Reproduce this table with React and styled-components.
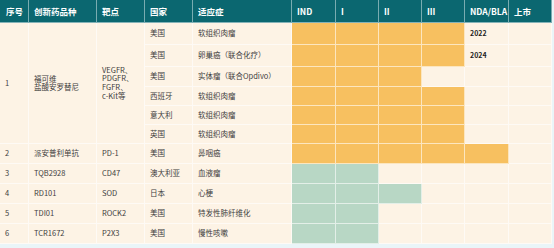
import React from "react"
import styled, { createGlobalStyle } from "styled-components"

const GlobalStyle = createGlobalStyle`
  html, body {
    margin: 0;
    padding: 0;
    background: #eaf5f8;
  }
  body {
    font-family: "Noto Sans CJK SC", "Noto Sans", sans-serif;
  }
`

const fills = {
  orange: "#f7c060",
  green: "#b8d7c5",
  none: "#fdf3e5",
}

const Table = styled.div`
  width: 552px;
  display: grid;
  grid-template-columns: 29px 68px 48px 48px 99px 44px 43px 43px 43px 44px 43px;
  grid-template-rows: 23px 22px 22px 20px 19px 19px 19px 20px 20px 20px 20px 20px;
  background: #fdf3e5;
`

const HeadCell = styled.div`
  background: #0b6770;
  color: #fff;
  font-size: 8.5px;
  font-weight: 700;
  display: flex;
  align-items: center;
  padding-left: ${({ $pad }) => $pad ?? 5}px;
  white-space: nowrap;
  overflow: hidden;
  border-right: 1px solid rgba(255, 255, 255, 0.45);
  border-bottom: 1px solid rgba(255, 255, 255, 0.5);
  box-sizing: border-box;
`

const Cell = styled.div`
  background: ${({ $fill }) => fills[$fill || "none"]};
  color: #3d3d3d;
  font-size: 7.5px;
  line-height: 8.6px;
  display: flex;
  align-items: center;
  padding-left: 5px;
  box-sizing: border-box;
  white-space: nowrap;
  border-right: 1px solid rgba(255, 255, 255, 0.6);
  border-bottom: 1px solid rgba(255, 255, 255, 0.6);
  grid-row: ${({ $span }) => ($span ? `span ${$span}` : "auto")};
`

const Lines = styled.div`
  display: flex;
  flex-direction: column;
  line-height: ${({ $lh }) => $lh}px;
`

const Year = styled.span`
  font-weight: 700;
  color: #1e1e1e;
  font-size: 7px;
`

const heads = ["序号", "创新药品种", "靶点", "国家", "适应症", "IND", "I", "II", "III", "NDA/BLA", "上市"]

const O = "orange"
const G = "green"

const fcRows = [
  { country: "美国", ind: "软组织肉瘤", phases: [O, O, O, O], year: "2022" },
  { country: "美国", ind: "卵巢癌（联合化疗）", phases: [O, O, O, O], year: "2024" },
  { country: "美国", ind: "实体瘤（联合Opdivo）", phases: [O, O, O] },
  { country: "西班牙", ind: "软组织肉瘤", phases: [O, O, O, O] },
  { country: "意大利", ind: "软组织肉瘤", phases: [O, O, O, O] },
  { country: "英国", ind: "软组织肉瘤", phases: [O, O, O, O] },
]

const others = [
  { no: "2", drug: "派安普利单抗", target: "PD-1", country: "美国", ind: "鼻咽癌", phases: [O, O, O, O, O] },
  { no: "3", drug: "TQB2928", target: "CD47", country: "澳大利亚", ind: "血液瘤", phases: [G, G] },
  { no: "4", drug: "RD101", target: "SOD", country: "日本", ind: "心梗", phases: [G, G, G] },
  { no: "5", drug: "TDI01", target: "ROCK2", country: "美国", ind: "特发性肺纤维化", phases: [G, G] },
  { no: "6", drug: "TCR1672", target: "P2X3", country: "美国", ind: "慢性咳嗽", phases: [G, G] },
]

// IND, I, II, III, NDA/BLA, 上市
const Phases = ({ phases, year }) =>
  [0, 1, 2, 3, 4, 5].map(i => (
    <Cell key={i} $fill={phases[i]}>
      {i === 4 && year ? <Year>{year}</Year> : null}
    </Cell>
  ))

export default function App() {
  return (
    <>
      <GlobalStyle />
      <Table>
        {heads.map((h, i) => (
          <HeadCell key={h} $pad={i === 0 ? 6 : 5}>
            {h}
          </HeadCell>
        ))}

        {fcRows.map((r, i) => (
          <React.Fragment key={"fc" + i}>
            {i === 0 && (
              <>
                <Cell $span={6}>1</Cell>
                <Cell $span={6}>
                  <Lines $lh={8}>
                    <span>福可维</span>
                    <span>盐酸安罗替尼</span>
                  </Lines>
                </Cell>
                <Cell $span={6}>
                  <Lines $lh={8.7}>
                    <span>VEGFR、</span>
                    <span>PDGFR、</span>
                    <span>FGFR、</span>
                    <span>c-Kit等</span>
                  </Lines>
                </Cell>
              </>
            )}
            <Cell>{r.country}</Cell>
            <Cell>{r.ind}</Cell>
            <Phases phases={r.phases} year={r.year} />
          </React.Fragment>
        ))}

        {others.map(r => (
          <React.Fragment key={r.no}>
            <Cell>{r.no}</Cell>
            <Cell>{r.drug}</Cell>
            <Cell>{r.target}</Cell>
            <Cell>{r.country}</Cell>
            <Cell>{r.ind}</Cell>
            <Phases phases={r.phases} />
          </React.Fragment>
        ))}
      </Table>
    </>
  )
}
